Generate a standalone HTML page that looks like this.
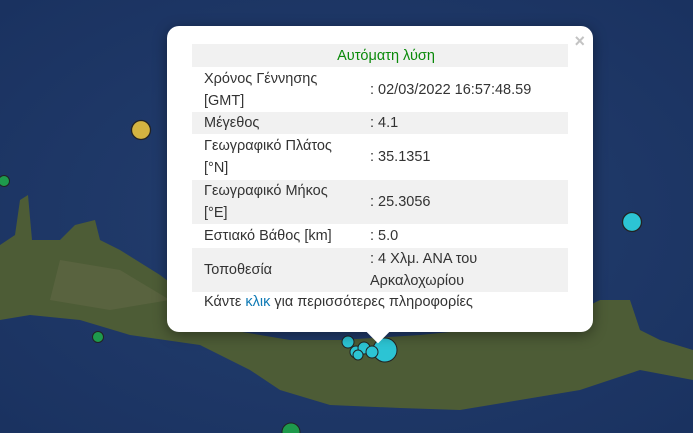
<!DOCTYPE html>
<html><head><meta charset="utf-8"><style>
html,body{margin:0;padding:0;width:693px;height:433px;overflow:hidden;background:#1f3866;}
.map{position:absolute;left:0;top:0}
.pop{position:absolute;left:167px;top:26px;width:426px;height:306px;background:#fff;border-radius:12px;box-shadow:0 3px 14px rgba(0,0,0,.4);font-family:"Liberation Sans","DejaVu Sans",sans-serif;font-size:14.5px;color:#333;}
.tip{position:absolute;left:370px;top:324px;width:16px;height:16px;background:#fff;transform:rotate(45deg);z-index:2}
.x{position:absolute;right:8px;top:5px;color:#c3c3c3;font-size:18px;font-weight:bold;}
table{position:absolute;left:25px;top:18px;width:376px;border-collapse:collapse;}
td{padding:0 0 0 12px;line-height:22px;vertical-align:middle}
tr.g{background:#f1f1f1}
td.v{padding-left:0}
.h{text-align:center;color:#0a8a0a;height:23px}
.f{position:absolute;left:37px;top:268px;}
a{color:#0f7ab5;text-decoration:none}
</style></head><body>
<svg class="map" width="693" height="433">
<defs><radialGradient id="s" cx="50%" cy="50%" r="70%"><stop offset="0" stop-color="#243f70"/><stop offset="1" stop-color="#1a3260"/></radialGradient></defs>
<rect width="693" height="433" fill="url(#s)"/>
<path d="M0,245 L15,235 L20,200 L28,195 L32,240 L60,240 L75,225 L95,220 L100,240 L120,250 L160,275 L200,305 L230,330 L290,340 L340,340 L420,335 L470,330 L520,330 L560,320 L600,300 L630,300 L640,330 L660,340 L693,350 L693,380 L640,370 L580,390 L520,400 L460,410 L400,408 L330,405 L280,390 L250,370 L200,345 L130,335 L80,320 L30,315 L0,320 Z" fill="#4d5c36"/>
<path d="M60,260 L120,270 L170,300 L110,310 L50,300 Z" fill="#666a48" opacity=".5"/>
<circle cx="141" cy="130" r="9.5" fill="#d4b441" stroke="#222" stroke-width="1.3"/>
<circle cx="4" cy="181" r="5.5" fill="#1e9a4c" stroke="#222"/>
<circle cx="98" cy="337" r="5.5" fill="#1e9a4c" stroke="#222"/>
<circle cx="632" cy="222" r="9.5" fill="#2cc4d4" stroke="#222" stroke-width="1.3"/>
<circle cx="291" cy="432" r="9" fill="#1e9a4c" stroke="#222"/>
<circle cx="385" cy="350" r="12" fill="#2cc4d4" stroke="#222"/>
<circle cx="348" cy="342" r="6" fill="#2cc4d4" stroke="#222"/>
<circle cx="356" cy="352" r="6" fill="#2cc4d4" stroke="#222"/>
<circle cx="364" cy="348" r="6" fill="#2cc4d4" stroke="#222"/>
<circle cx="372" cy="352" r="6" fill="#2cc4d4" stroke="#222"/>
<circle cx="358" cy="355" r="5" fill="#2cc4d4" stroke="#222"/>
</svg>
<div class="pop">
<div class="x">×</div>
<table>
<tr class="g"><td colspan="2" class="h">Αυτόματη λύση</td></tr>
<tr style="height:45px"><td style="width:166px">Χρόνος Γέννησης<br>[GMT]</td><td class="v">: 02/03/2022 16:57:48.59</td></tr>
<tr class="g" style="height:22px"><td>Μέγεθος</td><td class="v">: 4.1</td></tr>
<tr style="height:46px"><td>Γεωγραφικό Πλάτος<br>[°N]</td><td class="v">: 35.1351</td></tr>
<tr class="g" style="height:44px"><td>Γεωγραφικό Μήκος<br>[°E]</td><td class="v">: 25.3056</td></tr>
<tr style="height:24px"><td>Εστιακό Βάθος [km]</td><td class="v">: 5.0</td></tr>
<tr class="g" style="height:44px"><td>Τοποθεσία</td><td class="v">: 4 Χλμ. ΑΝΑ του<br>Αρκαλοχωρίου</td></tr>
</table>
<div class="f">Κάντε <a>κλικ</a> για περισσότερες πληροφορίες</div>
</div>
<div class="tip"></div>
</body></html>
